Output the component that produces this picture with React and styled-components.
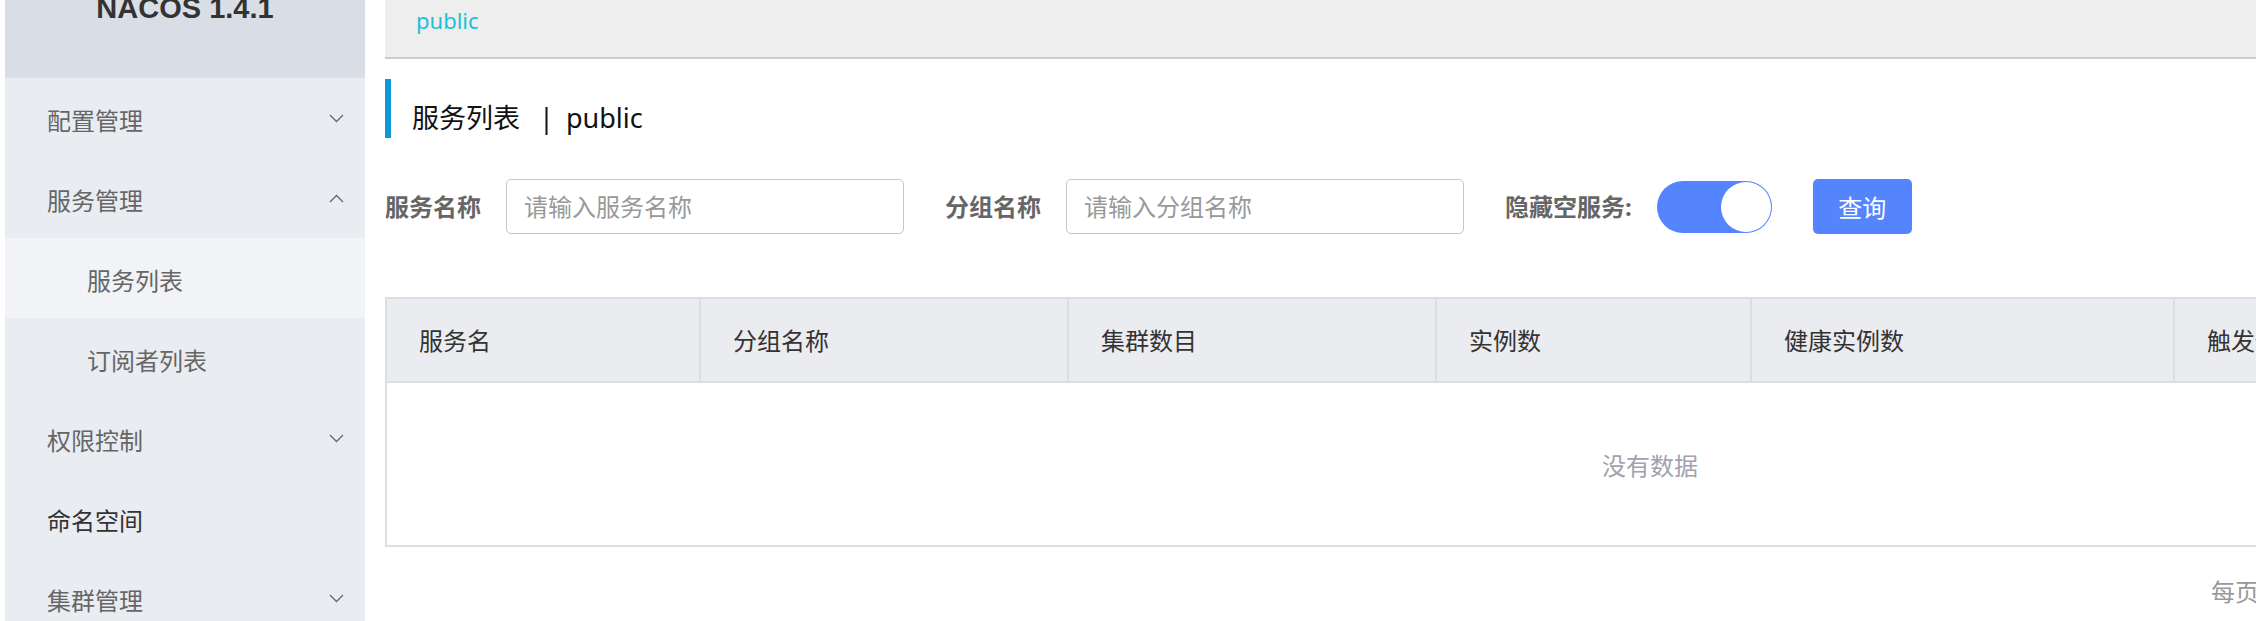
import React from "react";
import styled, { createGlobalStyle } from "styled-components";

const GlobalStyle = createGlobalStyle`
  html, body {
    margin: 0;
    padding: 0;
    overflow: hidden;
    background: #fff;
  }
  body {
    font-family: "Noto Sans", "Noto Sans CJK SC", sans-serif;
  }
  * {
    box-sizing: border-box;
  }
`;

const menu = [
  { label: "配置管理", arrow: "down" },
  { label: "服务管理", arrow: "up" },
  { label: "服务列表", sub: true, active: true },
  { label: "订阅者列表", sub: true },
  { label: "权限控制", arrow: "down" },
  { label: "命名空间", dark: true },
  { label: "集群管理", arrow: "down" },
];

const columns = [
  { title: "服务名", width: 314 },
  { title: "分组名称", width: 368 },
  { title: "集群数目", width: 368 },
  { title: "实例数", width: 315 },
  { title: "健康实例数", width: 423 },
  { title: "触发保护阈值", width: 316 },
  { title: "操作", width: 422 },
];

const Chevron = ({ dir }) => (
  <svg width="15" height="9" viewBox="0 0 15 9">
    <polyline
      points={dir === "up" ? "1,8 7.5,1.5 14,8" : "1,1 7.5,7.5 14,1"}
      fill="none"
      stroke="#666"
      strokeWidth="1.3"
    />
  </svg>
);

const App = () => {
  return (
    <>
      <GlobalStyle />
      <Page>
        <Sidebar>
          <Logo>
            <LogoText>NACOS 1.4.1</LogoText>
          </Logo>
          {menu.map((item) => (
            <MenuItem
              key={item.label}
              $sub={item.sub}
              $active={item.active}
              $dark={item.dark}
            >
              <span>{item.label}</span>
              {item.arrow && <Chevron dir={item.arrow} />}
            </MenuItem>
          ))}
        </Sidebar>

        <Main>
          <TopBar>public</TopBar>

          <Title>
            服务列表<Sep>|</Sep>public
          </Title>

          <SearchRow>
            <FormItem>
              <Label>服务名称</Label>
              <Input placeholder="请输入服务名称" />
            </FormItem>
            <FormItem>
              <Label>分组名称</Label>
              <Input placeholder="请输入分组名称" />
            </FormItem>
            <FormItem>
              <Label>隐藏空服务:</Label>
              <Switch>
                <Knob />
              </Switch>
            </FormItem>
            <QueryButton>查询</QueryButton>
          </SearchRow>

          <Table>
            <HeaderRow>
              {columns.map((col) => (
                <HeaderCell key={col.title} style={{ width: col.width }}>
                  {col.title}
                </HeaderCell>
              ))}
            </HeaderRow>
            <EmptyBody>没有数据</EmptyBody>
          </Table>

          <Footer>
            <Pager>
              <span>每页显示：</span>
              <PageSize $on>10</PageSize>
              <PageSize>20</PageSize>
              <PageSize>30</PageSize>
            </Pager>
          </Footer>
        </Main>
      </Page>
    </>
  );
};

export default App;

const Page = styled.div`
  display: flex;
  align-items: flex-start;
  padding-left: 5px;
  width: max-content;
`;

const Sidebar = styled.aside`
  width: 360px;
  flex-shrink: 0;
  background: #e9ecf1;
  min-height: 700px;
`;

const Logo = styled.div`
  height: 78px;
  background: #d9dee6;
  display: flex;
  justify-content: center;
  overflow: hidden;
`;

const LogoText = styled.div`
  font-family: "Liberation Sans", Arial, sans-serif;
  font-weight: bold;
  font-size: 29px;
  line-height: 29px;
  color: #333;
  margin-top: -6px;
`;

const MenuItem = styled.div`
  height: 80px;
  display: flex;
  align-items: center;
  justify-content: space-between;
  padding: 5px 21px 0 ${(p) => (p.$sub ? 82 : 42)}px;
  font-size: 24px;
  line-height: 32px;
  color: ${(p) => (p.$dark ? "#333" : "#666")};
  background: ${(p) => (p.$active ? "#f1f3f6" : "transparent")};

  svg {
    margin-top: -4px;
  }
`;

const Main = styled.main`
  margin-left: 20px;
  width: 2530px;
  flex-shrink: 0;
`;

const TopBar = styled.div`
  height: 59px;
  background: #eee;
  border-bottom: 2px solid #ccc;
  padding-left: 31px;
  font-size: 22px;
  line-height: 40px;
  color: #1bc1da;
`;

const Title = styled.h1`
  margin: 20px 0 0;
  height: 59px;
  border-left: 6px solid #0e99d6;
  padding: 0 0 2px 21px;
  display: flex;
  align-items: flex-end;
  font-size: 27px;
  font-weight: normal;
  line-height: 36px;
  color: #111;
`;

const Sep = styled.span`
  margin: 0 12px 0 19px;
`;

const SearchRow = styled.div`
  margin-top: 41px;
  height: 55px;
  display: flex;
  align-items: center;
  gap: 41px;
`;

const FormItem = styled.div`
  display: flex;
  align-items: center;
  gap: 25px;
`;

const Label = styled.label`
  font-size: 24px;
  font-weight: bold;
  line-height: 32px;
  color: #666;
`;

const Input = styled.input`
  width: 398px;
  height: 55px;
  border: 1.5px solid #c4c6cf;
  border-radius: 5px;
  padding: 0 17px;
  font-family: inherit;
  font-size: 24px;
  color: #333;
  outline: none;
  &::placeholder {
    color: #999;
  }
`;

const Switch = styled.div`
  width: 115px;
  height: 52px;
  border-radius: 26px;
  background: #5584ff;
  display: flex;
  justify-content: flex-end;
  align-items: center;
  padding: 1px;
`;

const Knob = styled.div`
  width: 50px;
  height: 50px;
  border-radius: 50%;
  background: #fff;
`;

const QueryButton = styled.button`
  width: 99px;
  height: 55px;
  border: none;
  border-radius: 5px;
  background: #5584ff;
  color: #fff;
  font-family: inherit;
  font-size: 24px;
  cursor: pointer;
`;

const Table = styled.div`
  margin-top: 63px;
  border: 2px solid #dcdee3;
`;

const HeaderRow = styled.div`
  display: flex;
  height: 84px;
  background: #ebecf0;
  border-bottom: 2px solid #dcdee3;
`;

const HeaderCell = styled.div`
  flex-shrink: 0;
  display: flex;
  align-items: center;
  padding: 2px 0 0 32px;
  border-right: 2px solid #dcdee3;
  font-size: 24px;
  line-height: 32px;
  color: #333;
  &:last-child {
    border-right: none;
  }
`;

const EmptyBody = styled.div`
  height: 162px;
  display: flex;
  align-items: center;
  justify-content: center;
  font-size: 24px;
  color: #a0a2ad;
`;

const Footer = styled.div`
  display: flex;
  justify-content: flex-end;
  padding-top: 30px;
`;

const Pager = styled.div`
  width: 704px;
  display: flex;
  align-items: center;
  gap: 12px;
  font-size: 24px;
  line-height: 30px;
  color: #999;
`;

const PageSize = styled.span`
  color: ${(p) => (p.$on ? "#5584ff" : "#666")};
`;
